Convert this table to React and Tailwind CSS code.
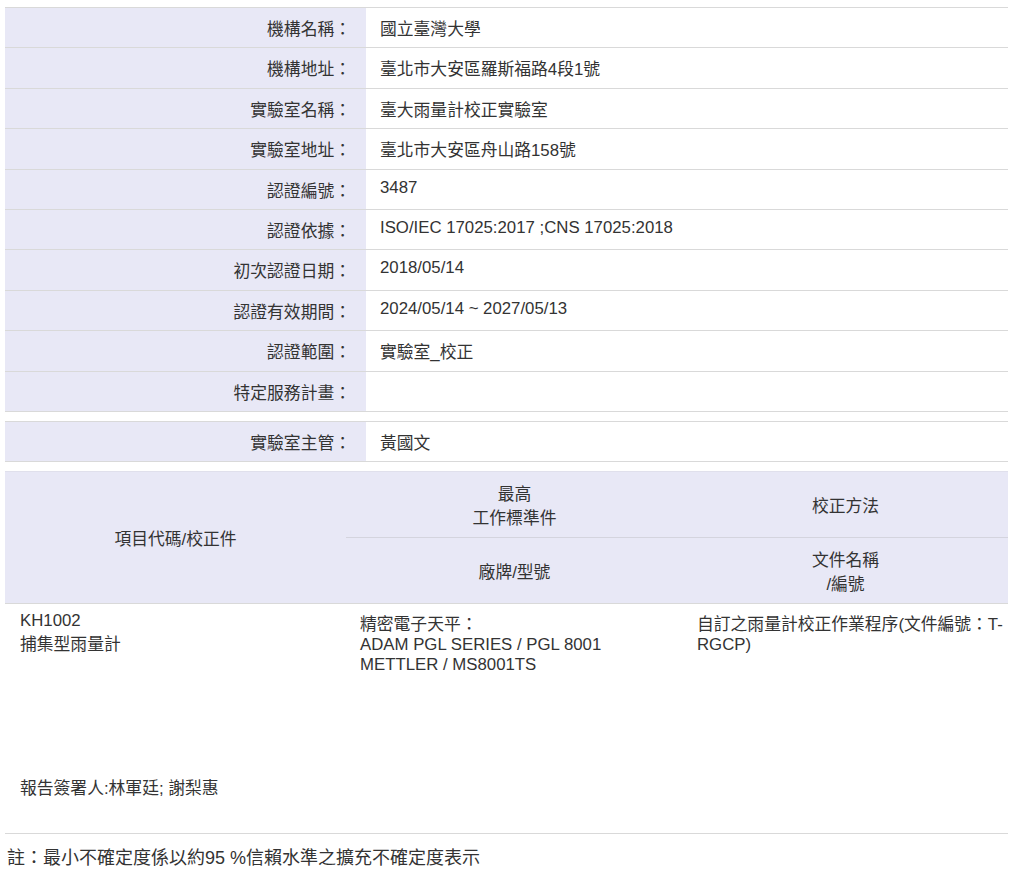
import React from "react";

const rows1 = [
  ["機構名稱：", "國立臺灣大學"],
  ["機構地址：", "臺北市大安區羅斯福路4段1號"],
  ["實驗室名稱：", "臺大雨量計校正實驗室"],
  ["實驗室地址：", "臺北市大安區舟山路158號"],
  ["認證編號：", "3487"],
  ["認證依據：", "ISO/IEC 17025:2017 ;CNS 17025:2018"],
  ["初次認證日期：", "2018/05/14"],
  ["認證有效期間：", "2024/05/14 ~ 2027/05/13"],
  ["認證範圍：", "實驗室_校正"],
  ["特定服務計畫：", ""],
];

function InfoRow({ label, value }) {
  return (
    <div className="grid grid-cols-[361px_1fr] h-[40.4px] border-b border-[#d9d9d9]">
      <div className="bg-[#e8e8f6] text-right pr-[15px] pt-[8px]">{label}</div>
      <div className="pl-[14px] pt-[8px]">{value}</div>
    </div>
  );
}

export default function App() {
  return (
    <div
      className="text-[16.8px] text-[#333] leading-[normal] bg-white min-h-[882px]"
      style={{ fontFamily: '"Liberation Sans", "Noto Sans CJK TC", sans-serif' }}
    >
      <div className="ml-[5px] w-[1003px] pt-[7px]">
        <div className="border-t border-[#d9d9d9]">
          {rows1.map(([l, v]) => (
            <InfoRow key={l} label={l} value={v} />
          ))}
        </div>

        <div className="mt-[9px] border-t border-[#d9d9d9]">
          <InfoRow label="實驗室主管：" value="黃國文" />
        </div>

        <div className="mt-[9px] grid grid-cols-[341px_337px_1fr] grid-rows-[66px_65px] bg-[#e8e8f6] border-t border-b border-[#e0e0ec] border-b-[#d9d9d9]">
          <div className="row-span-2 flex items-center justify-center">項目代碼/校正件</div>
          <div className="flex flex-col items-center justify-center text-center border-b border-[#d4d4de]">
            <span>最高</span>
            <span>工作標準件</span>
          </div>
          <div className="flex items-center justify-center border-b border-[#d4d4de]">校正方法</div>
          <div className="flex items-center justify-center">廠牌/型號</div>
          <div className="flex flex-col items-center justify-center">
            <span>文件名稱</span>
            <span>/編號</span>
          </div>
        </div>

        <div className="grid grid-cols-[341px_337px_1fr] h-[165px] pt-[7px]">
          <div className="pl-[15px]">
            <div>KH1002</div>
            <div>捕集型雨量計</div>
          </div>
          <div className="pl-[14px]">
            <div>精密電子天平：</div>
            <div>ADAM PGL SERIES / PGL 8001</div>
            <div>METTLER / MS8001TS</div>
          </div>
          <div className="pl-[14px] pr-[2px]">
            <div>自訂之雨量計校正作業程序(文件編號：T-RGCP)</div>
          </div>
        </div>

        <div className="pl-[15px] pt-[6px]">報告簽署人:林軍廷; 謝梨惠</div>

        <div className="mt-[34px] border-t border-[#d9d9d9]" />
        <div className="pl-[2px] pt-[9px] text-[18px]">註：最小不確定度係以約95 %信賴水準之擴充不確定度表示</div>
      </div>
    </div>
  );
}
